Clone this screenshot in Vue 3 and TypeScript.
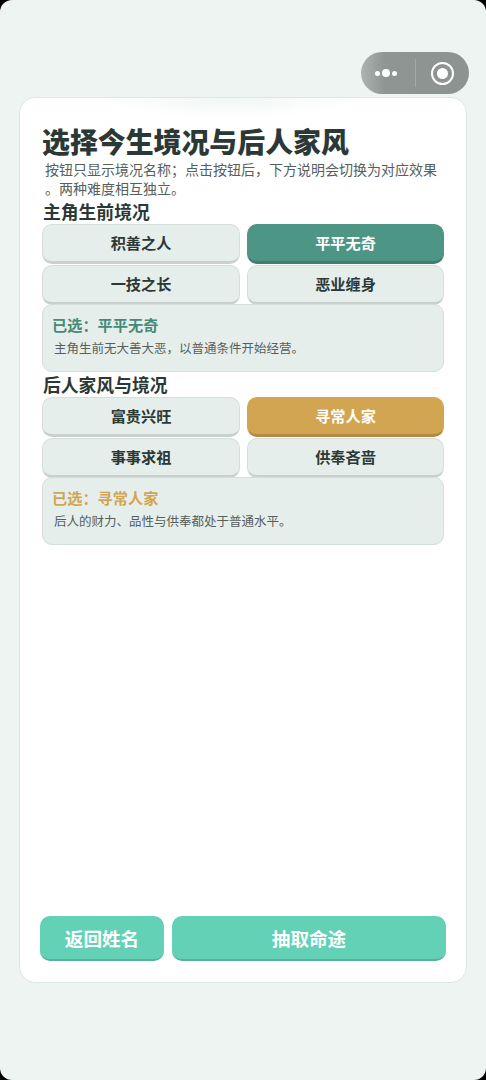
<script setup lang="ts">
interface Group {
  heading: string
  options: string[]
  selected: string
  desc: string
  tone: string
}

const groups: Group[] = [
  {
    heading: '主角生前境况',
    options: ['积善之人', '平平无奇', '一技之长', '恶业缠身'],
    selected: '平平无奇',
    desc: '主角生前无大善大恶，以普通条件开始经营。',
    tone: 'green',
  },
  {
    heading: '后人家风与境况',
    options: ['富贵兴旺', '寻常人家', '事事求祖', '供奉吝啬'],
    selected: '寻常人家',
    desc: '后人的财力、品性与供奉都处于普通水平。',
    tone: 'gold',
  },
]
</script>

<template>
  <div class="page">
    <div class="capsule">
      <span class="dots"><i class="dot"></i><i class="dot big"></i><i class="dot"></i></span>
      <span class="sep"></span>
      <span class="ring"><i></i></span>
    </div>
    <main class="card">
      <h1 class="title">选择今生境况与后人家风</h1>
      <p class="intro">按钮只显示境况名称；点击按钮后，下方说明会切换为对应效果。两种难度相互独立。</p>
      <section v-for="g in groups" :key="g.heading" class="group">
        <h2 class="heading">{{ g.heading }}</h2>
        <div class="options">
          <button
            v-for="o in g.options"
            :key="o"
            class="option"
            :class="o === g.selected ? g.tone : ''"
          >{{ o }}</button>
        </div>
        <div class="info">
          <div class="info-title" :class="'text-' + g.tone">已选：{{ g.selected }}</div>
          <div class="info-desc">{{ g.desc }}</div>
        </div>
      </section>
      <div class="actions">
        <button class="action back">返回姓名</button>
        <button class="action draw">抽取命途</button>
      </div>
    </main>
  </div>
</template>

<style>
html, body { margin: 0; background: #000; }
</style>

<style scoped>
.page {
  position: relative;
  box-sizing: border-box;
  height: 1080px;
  padding: 97px 19px 97px 19px;
  background: #edf4f2;
  border-radius: 12px;
  font-family: "Noto Sans CJK SC", "Noto Sans", sans-serif;
  overflow: hidden;
}
.capsule {
  position: absolute;
  left: 361px;
  top: 52px;
  width: 108px;
  height: 42px;
  border-radius: 21px;
  background: linear-gradient(90deg, #aeb3b1 0%, #8f9593 22%, #8d9391 100%);
  display: flex;
  align-items: center;
}
.dots { width: 50px; display: flex; align-items: center; justify-content: center; gap: 2px; margin-right: 4px; }
.dot { width: 5px; height: 5px; border-radius: 50%; background: #fff; display: block; }
.dot.big { width: 8px; height: 8px; }
.sep { width: 1px; height: 28px; background: #a5aaa8; }
.ring {
  box-sizing: border-box;
  width: 23px;
  height: 23px;
  margin-left: 15px;
  border: 2px solid #fff;
  border-radius: 50%;
  display: flex;
  align-items: center;
  justify-content: center;
}
.ring i { display: block; width: 11px; height: 11px; border-radius: 50%; background: #fff; }
.card {
  box-sizing: border-box;
  height: 886px;
  padding: 26px 22px 20px 22px;
  background: #fff radial-gradient(ellipse 130px 20px at 47% 0, #f1f5f4, rgba(255, 255, 255, 0)) no-repeat;
  border: 1px solid #dde6e3;
  border-radius: 16px;
  display: flex;
  flex-direction: column;
}
.title {
  margin: 0;
  font-size: 27.9px;
  line-height: 34px;
  font-weight: 900;
  color: #2b3835;
}
.intro {
  margin: 0;
  padding: 2px 3px 0;
  font-size: 14px;
  line-height: 19px;
  color: #55605d;
  line-break: anywhere;
}
.group { display: flex; flex-direction: column; }
.heading {
  margin: 1px 0 0;
  padding-left: 1px;
  font-size: 17.8px;
  line-height: 25px;
  font-weight: 700;
  color: #2b3835;
}
.group + .group .heading { margin-top: 0; }
.options {
  display: grid;
  grid-template-columns: 198px 197px;
  justify-content: space-between;
  row-gap: 2px;
}
.option {
  box-sizing: border-box;
  height: 40px;
  margin-bottom: -1px;
  padding: 0 0 2px;
  border: 1px solid #d5dedb;
  border-bottom: 3px solid #c8d1ce;
  border-radius: 10px;
  background: #e6eeeb;
  color: #2b3835;
  font-family: inherit;
  font-size: 15.2px;
  font-weight: 700;
}
.option.green {
  background: #4d9584;
  border-color: #4d9584;
  border-bottom-color: #3f7f70;
  color: #fff;
}
.option.gold {
  background: #d2a553;
  border-color: #d2a553;
  border-bottom-color: #b48b42;
  color: #fff;
}
.info {
  box-sizing: border-box;
  height: 68px;
  padding: 9px 9px 0;
  background: #e6eeeb;
  border: 1px solid #d5dedb;
  border-radius: 10px;
  position: relative;
}
.info-title { font-size: 15.2px; line-height: 21px; font-weight: 700; }
.text-green { color: #458a78; }
.text-gold { color: #d2a553; }
.info-desc {
  padding: 4px 2px 0;
  font-size: 12.5px;
  line-height: 18px;
  color: #55605d;
}
.actions {
  margin-top: auto;
  margin-left: -2px;
  margin-right: -2px;
  margin-bottom: 1px;
  display: flex;
  gap: 8px;
}
.action {
  box-sizing: border-box;
  height: 45px;
  padding: 0 0 1px;
  border: 0;
  border-bottom: 2px solid #56b09a;
  border-radius: 10px;
  background: #63d1b5;
  color: #fff;
  font-family: inherit;
  font-size: 18.6px;
  font-weight: 700;
}
.back { width: 124px; flex: none; }
.draw { flex: 1; }
</style>
